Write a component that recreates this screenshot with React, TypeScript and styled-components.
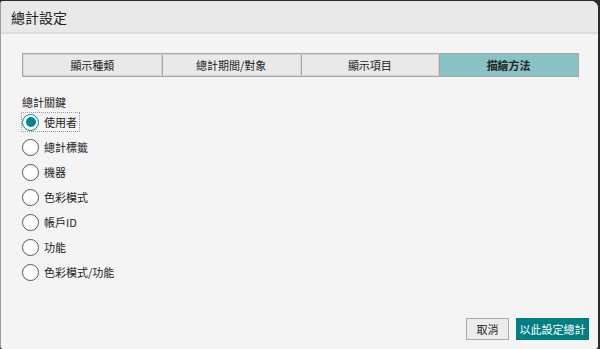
import React, { useState } from "react";
import styled, { createGlobalStyle } from "styled-components";

const GlobalStyle = createGlobalStyle`
  html, body {
    margin: 0;
    padding: 0;
    background: #2b2b2b;
    font-family: "Noto Sans CJK TC", "Noto Sans", sans-serif;
  }
`;

const Dialog = styled.div`
  display: flex;
  flex-direction: column;
  box-sizing: border-box;
  width: 598px;
  height: 348px;
  margin-top: 1px;
  background: #f4f4f4;
  border-left: 1px solid #9c9c9c;
  border-radius: 3px 7px 3px 3px;
  overflow: hidden;
`;

const Header = styled.div`
  display: flex;
  align-items: center;
  height: 31px;
  padding-left: 10px;
  background: #e9e9e9;
  border-bottom: 2px solid #dcdcdc;
  font-size: 14px;
  color: #222;
`;

const Body = styled.div`
  flex: 1;
  display: flex;
  flex-direction: column;
  padding: 19px 9px 9px 21px;
`;

const Tabs = styled.div`
  display: grid;
  grid-template-columns: repeat(4, 1fr);
  border: 1px solid #a6a6a6;
  width: 557px;
  box-sizing: border-box;
`;

const Tab = styled.div<{ active?: boolean }>`
  display: flex;
  align-items: center;
  justify-content: center;
  height: 20px;
  font-size: 11px;
  font-weight: ${(p) => (p.active ? 700 : 400)};
  color: #222;
  background: ${(p) => (p.active ? "#88c2c4" : "#e9e9e9")};
  border: 1px solid ${(p) => (p.active ? "#88c2c4" : "#d4d4d4")};
  & + & {
    border-left: 1px solid #a6a6a6;
  }
`;

const GroupLabel = styled.div`
  margin-top: 18px;
  font-size: 11px;
  color: #222;
  line-height: 15px;
`;

const Options = styled.div`
  display: flex;
  flex-direction: column;
  gap: 7px;
  margin-top: 3px;
`;

const Option = styled.label<{ focused?: boolean }>`
  display: flex;
  align-items: center;
  gap: 5px;
  align-self: flex-start;
  height: 18px;
  padding-right: 2px;
  font-size: 11px;
  color: #222;
  outline: ${(p) => (p.focused ? "1px dotted #9a9a9a" : "none")};
  cursor: pointer;
`;

const Circle = styled.span<{ checked?: boolean }>`
  box-sizing: border-box;
  width: 17px;
  height: 17px;
  border-radius: 50%;
  border: 1.5px solid ${(p) => (p.checked ? "#00878a" : "#555")};
  background: #fff;
  display: flex;
  align-items: center;
  justify-content: center;
  &::after {
    content: "";
    width: 10px;
    height: 10px;
    border-radius: 50%;
    background: ${(p) => (p.checked ? "#00878a" : "transparent")};
  }
`;

const Footer = styled.div`
  margin-top: auto;
  display: flex;
  justify-content: flex-end;
  gap: 7px;
`;

const Button = styled.button<{ primary?: boolean; w: number }>`
  box-sizing: border-box;
  width: ${(p) => p.w}px;
  height: 22px;
  padding: 0;
  font-family: "Noto Sans CJK TC", "Noto Sans", sans-serif;
  font-size: 11px;
  color: ${(p) => (p.primary ? "#fff" : "#222")};
  background: ${(p) => (p.primary ? "#007f82" : "#ececec")};
  border: 1px solid ${(p) => (p.primary ? "#007f82" : "#a9a9a9")};
`;

const tabs = ["顯示種類", "總計期間/對象", "顯示項目", "描繪方法"];
const options = ["使用者", "總計標籤", "機器", "色彩模式", "帳戶ID", "功能", "色彩模式/功能"];

const App = () => {
  const [selected, setSelected] = useState(0);
  return (
    <>
      <GlobalStyle />
      <Dialog>
        <Header>總計設定</Header>
        <Body>
          <Tabs>
            {tabs.map((t, i) => (
              <Tab key={t} active={i === 3}>
                {t}
              </Tab>
            ))}
          </Tabs>
          <GroupLabel>總計關鍵</GroupLabel>
          <Options>
            {options.map((o, i) => (
              <Option key={o} focused={i === 0} onClick={() => setSelected(i)}>
                <Circle checked={i === selected} />
                {o}
              </Option>
            ))}
          </Options>
          <Footer>
            <Button w={43}>取消</Button>
            <Button primary w={73}>
              以此設定總計
            </Button>
          </Footer>
        </Body>
      </Dialog>
    </>
  );
};

export default App;
